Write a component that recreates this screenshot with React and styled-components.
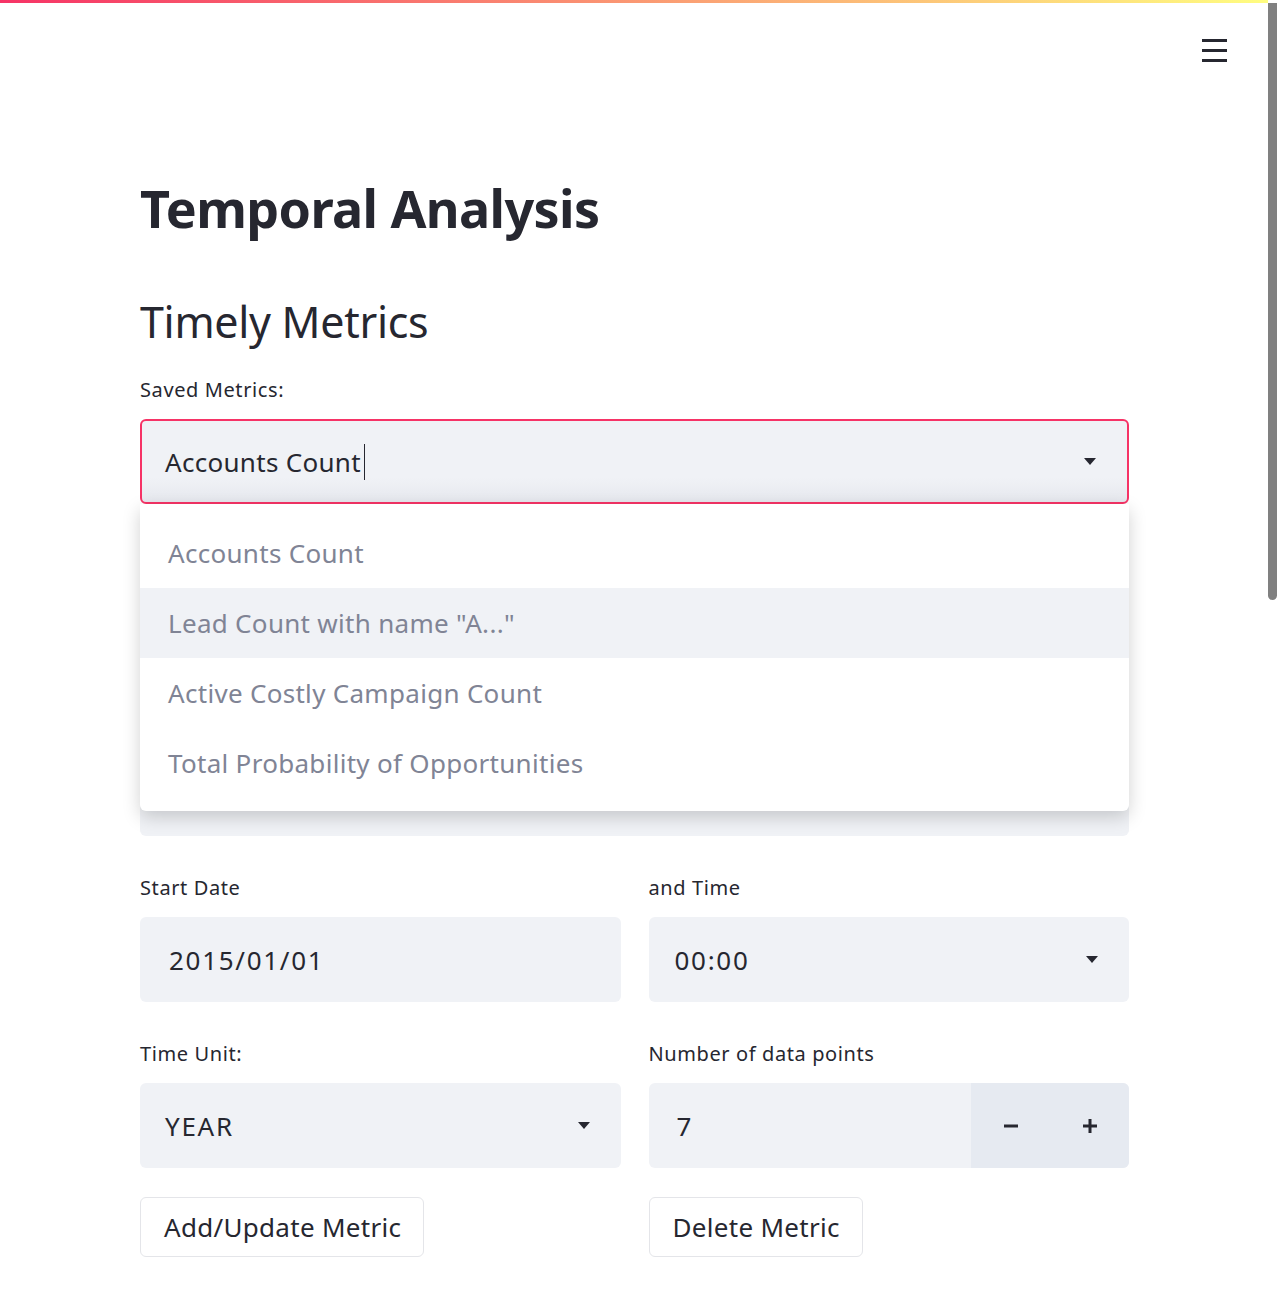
import styled, { createGlobalStyle } from "styled-components";

const GlobalStyle = createGlobalStyle`
  html, body {
    margin: 0;
    padding: 0;
    background: #fff;
  }
  body {
    font-family: "Noto Sans", "Liberation Sans", sans-serif;
    color: #262730;
  }
`;

const metrics = [
  "Accounts Count",
  'Lead Count with name "A..."',
  "Active Costly Campaign Count",
  "Total Probability of Opportunities",
];

function Caret() {
  return (
    <svg width="12" height="8" viewBox="0 0 12 8">
      <path d="M0 0h12L6 7z" fill="#262730" />
    </svg>
  );
}

function App() {
  return (
    <>
      <GlobalStyle />
      <Window>
        <Page>
          <Decoration />
          <Header>
            <MenuButton aria-label="menu">
              <span />
              <span />
              <span />
            </MenuButton>
          </Header>
          <Main>
            <Title>Temporal Analysis</Title>
            <Subtitle>Timely Metrics</Subtitle>

            <Widget>
              <Label>Saved Metrics:</Label>
              <SelectWrap>
                <SelectBox $focused>
                  <Value>
                    Accounts Count<TextCursor />
                  </Value>
                  <Caret />
                </SelectBox>
                <Menu>
                  {metrics.map((m, i) => (
                    <MenuItem key={m} $highlighted={i === 1}>
                      {m}
                    </MenuItem>
                  ))}
                </Menu>
              </SelectWrap>
            </Widget>

            {/* two fields hidden under the open menu */}
            <Widget>
              <Label />
              <InputBox />
            </Widget>
            <Widget>
              <Label />
              <InputBox />
            </Widget>

            <Columns>
              <Widget>
                <Label>Start Date</Label>
                <InputBox $pad={29}>
                  <Value $numeric>2015/01/01</Value>
                </InputBox>
              </Widget>
              <Widget>
                <Label>and Time</Label>
                <InputBox $pad={26}>
                  <Value $numeric>00:00</Value>
                  <Caret />
                </InputBox>
              </Widget>
            </Columns>

            <Columns>
              <Widget $gap={29}>
                <Label>Time Unit:</Label>
                <InputBox $pad={25}>
                  <Value $numeric>YEAR</Value>
                  <Caret />
                </InputBox>
              </Widget>
              <Widget $gap={29}>
                <Label>Number of data points</Label>
                <NumberBox>
                  <NumberValue>7</NumberValue>
                  <Stepper>
                    <StepButton aria-label="minus">
                      <svg width="14" height="14" viewBox="0 0 14 14">
                        <rect x="0" y="5.5" width="14" height="3" fill="#262730" />
                      </svg>
                    </StepButton>
                    <StepButton aria-label="plus">
                      <svg width="14" height="14" viewBox="0 0 14 14">
                        <rect x="0" y="5.5" width="14" height="3" fill="#262730" />
                        <rect x="5.5" y="0" width="3" height="14" fill="#262730" />
                      </svg>
                    </StepButton>
                  </Stepper>
                </NumberBox>
              </Widget>
            </Columns>

            <Columns>
              <div>
                <Button>Add/Update Metric</Button>
              </div>
              <div>
                <Button>Delete Metric</Button>
              </div>
            </Columns>
          </Main>
        </Page>
        <ScrollTrack>
          <ScrollThumb />
        </ScrollTrack>
      </Window>
    </>
  );
}

const Window = styled.div`
  display: flex;
  width: 100%;
  min-height: 1312px;
`;

const Page = styled.div`
  flex: 1;
  min-width: 0;
`;

const Decoration = styled.div`
  height: 3px;
  background: linear-gradient(90deg, #f63366, #fffd80);
`;

const Header = styled.header`
  display: flex;
  justify-content: flex-end;
  padding: 36px 41px 0 0;
  height: 30px;
`;

const MenuButton = styled.button`
  display: flex;
  flex-direction: column;
  gap: 7px;
  padding: 0;
  border: none;
  background: none;
  span {
    display: block;
    width: 25px;
    height: 3px;
    background: #262730;
  }
`;

const Main = styled.main`
  padding: 0 139px 60px 140px;
  display: flex;
  flex-direction: column;
`;

const Title = styled.h1`
  margin: 109px 0 0;
  font-size: 52px;
  line-height: 60px;
  font-weight: 700;
  letter-spacing: -0.6px;
`;

const Subtitle = styled.h2`
  margin: 58px 0 30px;
  font-size: 43px;
  line-height: 52px;
  font-weight: 400;
  letter-spacing: -0.3px;
`;

const Widget = styled.div`
  display: flex;
  flex-direction: column;
  margin-bottom: ${(p) => p.$gap ?? 40}px;
`;

const Label = styled.label`
  min-height: 24px;
  font-size: 20px;
  line-height: 24px;
  margin-bottom: 17px;
  letter-spacing: 0.6px;
  color: #262730;
`;

const SelectWrap = styled.div`
  position: relative;
`;

const SelectBox = styled.div`
  box-sizing: border-box;
  height: 85px;
  display: flex;
  align-items: center;
  padding: 0 31px 0 23px;
  background: linear-gradient(180deg, #f0f2f6 70%, #e6e8ee 100%);
  border: 2px solid ${(p) => (p.$focused ? "#f63366" : "transparent")};
  border-radius: 6px;
  font-size: 26px;
  letter-spacing: 0.3px;
`;

const Value = styled.div`
  flex: 1;
  display: flex;
  align-items: center;
  letter-spacing: ${(p) => (p.$numeric ? "1.7px" : "0.3px")};
`;

const TextCursor = styled.span`
  display: inline-block;
  width: 1px;
  height: 36px;
  margin-left: 3px;
  background: #262730;
`;

const Menu = styled.ul`
  position: absolute;
  z-index: 10;
  top: 85px;
  left: 0;
  right: 0;
  margin: 0;
  padding: 14px 0 13px;
  list-style: none;
  background: #fff;
  border-radius: 0 0 6px 6px;
  box-shadow: 0 6px 18px rgba(0, 0, 0, 0.18);
`;

const MenuItem = styled.li`
  height: 70px;
  display: flex;
  align-items: center;
  padding-left: 28px;
  font-size: 26px;
  letter-spacing: 0.3px;
  color: #808495;
  background: ${(p) => (p.$highlighted ? "#f0f2f6" : "#fff")};
`;

const InputBox = styled.div`
  box-sizing: border-box;
  height: 85px;
  display: flex;
  align-items: center;
  padding: 0 31px 0 ${(p) => p.$pad || 25}px;
  background: #f0f2f6;
  border-radius: 6px;
  font-size: 26px;
`;

const Columns = styled.div`
  display: grid;
  grid-template-columns: 1fr 1fr;
  gap: 28px;
`;

const NumberBox = styled.div`
  height: 85px;
  display: flex;
  background: #f0f2f6;
  border-radius: 6px;
  overflow: hidden;
`;

const NumberValue = styled.div`
  flex: 1;
  display: flex;
  align-items: center;
  padding-left: 28px;
  font-size: 26px;
`;

const Stepper = styled.div`
  display: flex;
  width: 158px;
  background: #e6eaf1;
`;

const StepButton = styled.button`
  flex: 1;
  display: flex;
  align-items: center;
  justify-content: center;
  border: none;
  background: none;
  padding: 0;
`;

const Button = styled.button`
  box-sizing: border-box;
  height: 60px;
  padding: 0 22px 0 23px;
  background: #fff;
  border: 1px solid #e4e5e9;
  border-radius: 6px;
  font-family: inherit;
  font-size: 26px;
  letter-spacing: 0.3px;
  color: #262730;
`;

const ScrollTrack = styled.div`
  width: 10px;
  padding-top: 3px;
  background: #fff;
`;

const ScrollThumb = styled.div`
  width: 9px;
  height: 597px;
  background: #808080;
  border-radius: 0 0 5px 5px;
`;

export default App;
